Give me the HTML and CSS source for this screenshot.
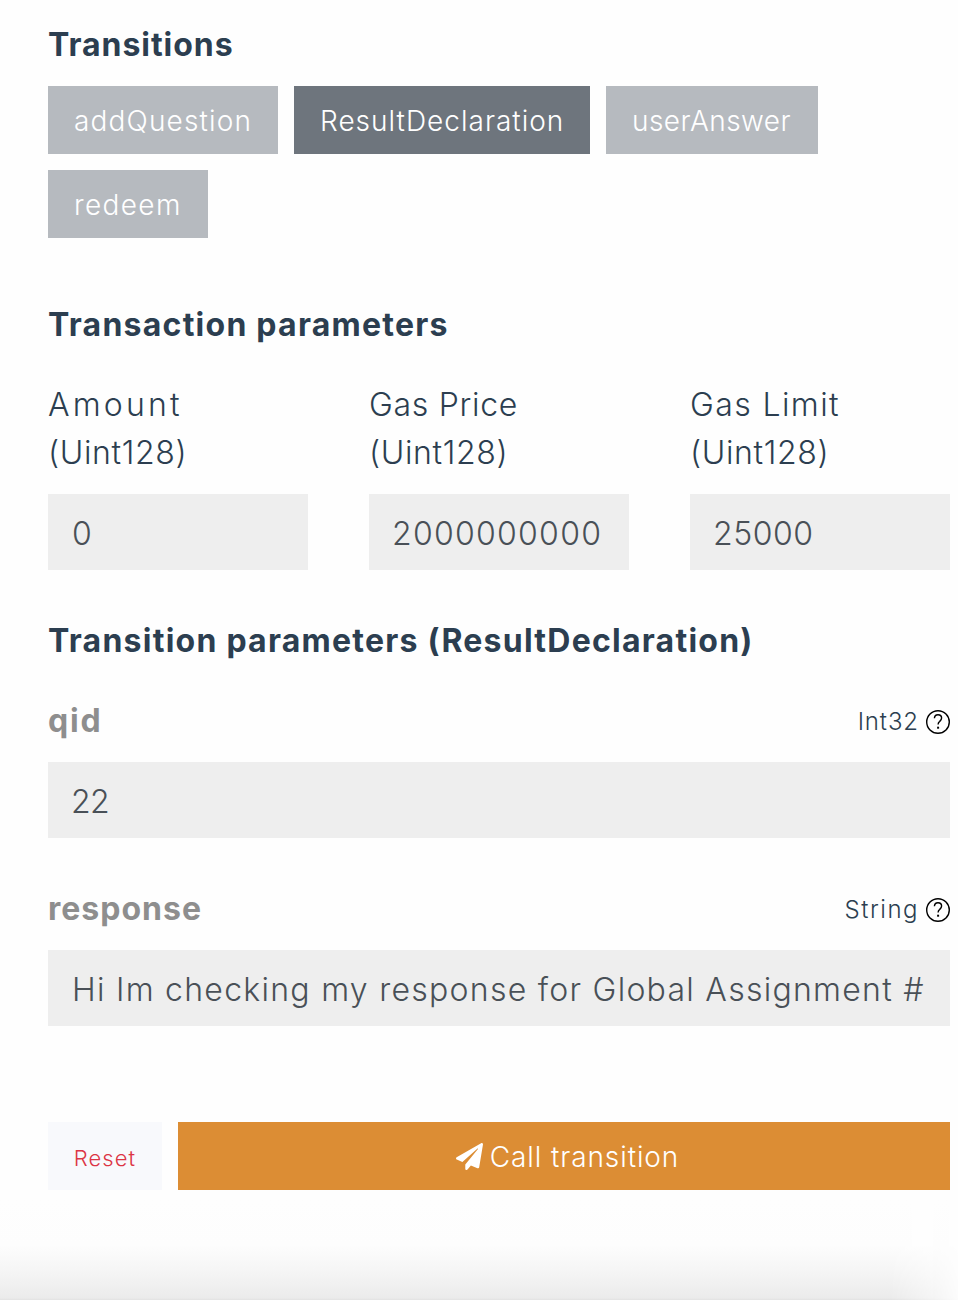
FILE: index.html
```html
<!DOCTYPE html>
<html lang="en">
<head>
<meta charset="utf-8">
<title>Call transition</title>
<link rel="stylesheet" href="styles.css">
</head>
<body>
<main class="panel">
  <h2 class="heading heading-transitions">Transitions</h2>
  <div class="transitions">
    <button class="btn btn-add">addQuestion</button>
    <button class="btn btn-result active">ResultDeclaration</button>
    <button class="btn btn-user">userAnswer</button>
    <button class="btn btn-redeem">redeem</button>
  </div>

  <h2 class="heading heading-transaction">Transaction parameters</h2>
  <div class="columns">
    <label class="column"><span class="name name-amount">Amount</span><span class="type">(Uint128)</span><input class="field" value="0"></label>
    <label class="column"><span class="name name-price">Gas Price</span><span class="type">(Uint128)</span><input class="field field-price" value="2000000000"></label>
    <label class="column"><span class="name name-limit">Gas Limit</span><span class="type">(Uint128)</span><input class="field field-limit" value="25000"></label>
  </div>

  <h2 class="heading heading-params">Transition parameters (ResultDeclaration)</h2>
  <section class="param">
    <div class="param-head">
      <span class="param-name param-qid">qid</span>
      <span class="param-type"><span class="type-int">Int32</span>
        <svg class="help" viewBox="0 0 24 24"><circle cx="12" cy="12" r="11.3"/><path d="M8.4 8.300C8.500 6.100 9.900 4.700 12 4.700s3.600 1.400 3.600 3.400c0 1.700-1 2.500-2 3.400-1 .8-1.500 1.500-1.500 3.100"/><path class="dot" d="M11.100 16.700h2v2h-2z"/></svg>
      </span>
    </div>
    <input class="field field-qid" value="22">
  </section>
  <section class="param">
    <div class="param-head">
      <span class="param-name param-response">response</span>
      <span class="param-type"><span class="type-string">String</span>
        <svg class="help" viewBox="0 0 24 24"><circle cx="12" cy="12" r="11.3"/><path d="M8.4 8.300C8.500 6.100 9.900 4.700 12 4.700s3.600 1.400 3.600 3.400c0 1.700-1 2.500-2 3.400-1 .8-1.500 1.500-1.500 3.100"/><path class="dot" d="M11.100 16.700h2v2h-2z"/></svg>
      </span>
    </div>
    <input class="field" value="Hi Im checking my response for Global Assignment #">
  </section>

  <div class="actions">
    <button class="reset">Reset</button>
    <button class="call">
      <svg class="plane" viewBox="0 0 512 512"><path d="M476 3.2L12.500 270.600c-18.100 10.400-15.800 35.600 2.200 43.200L121 358.400l287.300-253.200c5.500-4.900 13.300 2.600 8.600 8.300L176 407v80.500c0 23.600 28.500 32.900 42.500 15.800L282 426l124.600 52.200c14.200 6 30.400-2.900 33-18.200l72-432C515 7.800 493.300-6.800 476 3.200z"/></svg>
      <span class="call-text">Call transition</span>
    </button>
  </div>
</main>
<div class="shade"></div>
</body>
</html>
```

FILE: styles.css
```css
* { box-sizing: border-box; }
body {
  margin: 0;
  height: 1300px;
  display: flex;
  flex-direction: column;
  overflow: hidden;
  background: #fefefe;
  color: #2c3e50;
  font-family: Inter, "Open Sans", sans-serif;
  font-size: 32px;
  font-weight: 300;
  line-height: 48px;
}
button, input {
  font: inherit;
  border: 0;
  border-radius: 0;
  margin: 0;
}
.panel { padding: 21px 8px 0 48px; }
.heading {
  margin: 0;
  font-size: 32px;
  font-weight: 700;
  line-height: 48px;
  white-space: nowrap;
}
.heading-transitions { letter-spacing: 0.95px; }
.heading-transaction { margin-top: 63px; letter-spacing: 1.24px; }
.heading-params { margin-top: 47px; letter-spacing: 1.24px; }
.transitions {
  display: flex;
  flex-wrap: wrap;
  gap: 16px;
  margin-top: 17px;
}
.btn {
  height: 68px;
  padding: 2px 0 0 26px;
  background: #b6babf;
  color: #fff;
  font-size: 28px;
  line-height: 66px;
  text-align: left;
  white-space: nowrap;
}
.btn.active { background: #6e757d; }
.btn-add { width: 230px; letter-spacing: 1.15px; }
.btn-result { width: 296px; letter-spacing: 1px; }
.btn-user { width: 212px; letter-spacing: 0.45px; }
.btn-redeem { width: 160px; letter-spacing: 1.35px; }
.columns {
  display: grid;
  grid-template-columns: repeat(3, 260px);
  justify-content: space-between;
  margin-top: 32px;
}
.column { display: flex; flex-direction: column; }
.type { letter-spacing: 0.65px; }
.name-amount { letter-spacing: 3.2px; }
.name-price { letter-spacing: 0.7px; }
.name-limit { letter-spacing: 1.4px; }
.field {
  display: block;
  width: 100%;
  height: 76px;
  padding: 2px 23px 0 24px;
  background: #eee;
  color: #495057;
  letter-spacing: 1.27px;
  outline: 0;
}
.field-price { padding-left: 23px; }
.field-limit { padding-left: 23px; letter-spacing: 0.5px; }
.field-qid { padding-left: 23px; letter-spacing: -0.7px; }
.column .field { margin-top: 17px; }
.param { margin-top: 32px; }
.param + .param { margin-top: 47px; }
.param-head {
  display: flex;
  justify-content: space-between;
  align-items: center;
  height: 48px;
  margin-bottom: 17px;
}
.param-name { color: #8e8e8e; font-weight: 700; }
.param-qid { letter-spacing: 1.8px; }
.param-response { letter-spacing: 1px; }
.param-type {
  display: flex;
  align-items: center;
  gap: 7px;
  padding-top: 2px;
  font-size: 24px;
}
.type-int { letter-spacing: 0.9px; }
.type-string { letter-spacing: 1.5px; }
.help { width: 24px; height: 24px; fill: none; stroke: #000; stroke-width: 1.4; }
.help .dot { fill: #000; stroke: none; }
.actions { display: flex; gap: 16px; margin-top: 96px; }
.reset {
  width: 114px;
  height: 68px;
  padding: 4px 0 0;
  background: #f8f9fc;
  color: #dc3545;
  font-size: 22px;
  letter-spacing: 1.1px;
}
.call {
  flex: 1;
  display: flex;
  align-items: center;
  justify-content: center;
  gap: 7px;
  height: 68px;
  padding: 0 0 0 7px;
  background: #dc8d34;
  color: #fff;
  font-size: 28px;
  letter-spacing: 0.9px;
}
.call-text { padding-top: 2px; }
.plane { width: 27px; height: 27px; fill: #fff; }
.shade {
  flex: 1;
  margin-top: 10px;
  background: linear-gradient(#fefefe, #fdfdfd 45%, #f5f5f5 72%, #ebebeb 98%, #e2e2e2);
  -webkit-mask-image: linear-gradient(to right, #000 890px, rgba(0, 0, 0, 0.55) 930px, transparent 965px);
  mask-image: linear-gradient(to right, #000 890px, rgba(0, 0, 0, 0.55) 930px, transparent 965px);
}
```
